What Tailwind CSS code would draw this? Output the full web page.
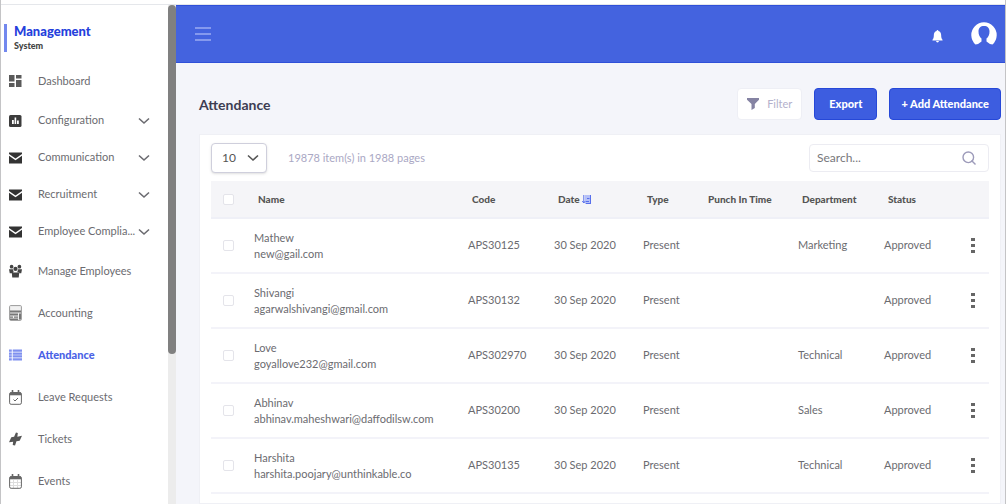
<!DOCTYPE html>
<html lang="en">
<head>
    <meta charset="UTF-8" />
    <meta name="viewport" content="width=device-width, initial-scale=1.0" />
    <title>Attendance - Management System</title>
    <script src="https://cdn.jsdelivr.net/npm/@tailwindcss/browser@4"></script>
</head>
<body class="h-screen overflow-hidden flex flex-col bg-white border-x border-[#c4c4c6] font-[Lato,sans-serif] text-[11px] text-[#6b6b70]">

<svg class="hidden">
    <symbol id="mail" viewBox="0 0 14 12"><path fill="currentColor" d="M0 0h14v1.600L7 6.500 0 1.600zM0 3.500l7 5 7-5V12H0z"/></symbol>
    <symbol id="chevron" viewBox="0 0 12 8"><path fill="none" stroke="currentColor" stroke-width="1.600" d="M1 1.500l5 4.500 5-4.500"/></symbol>
</svg>

<div class="h-[5px] shrink-0 border-b border-gray-200"></div>

<div class="flex flex-1 min-h-0">
    <!-- Sidebar -->
    <aside class="flex w-[175px] shrink-0 bg-white">
        <div class="flex-1 min-w-0 overflow-hidden">
            <div class="mt-[19px] mb-2 ml-[3px] h-7 border-l-3 border-[#7388ee] pl-[7px]">
                <p class="text-[13px] leading-[15px] font-black text-[#2440dc]">Management</p>
                <p class="text-[9px] leading-[13px] font-black text-[#444]">System</p>
            </div>
            <nav>
                <a href="#" class="flex h-[42px] items-center gap-4 pl-2">
                    <svg class="w-[13px] h-3 shrink-0 text-[#5a5a5a]" viewBox="0 0 13 12"><path fill="currentColor" d="M0 0h5.500v6.500H0zM7 0h5.500v3.500H7zM0 8h5.500v4H0zM7 5h5.500v7H7z"/></svg>
                    Dashboard
                </a>
                <a href="#" class="flex h-[37px] items-center gap-4 pl-2 pr-[18px]">
                    <svg class="w-[13px] h-3 shrink-0 text-[#3c3c3c]" viewBox="0 0 13 12"><rect width="12.500" height="12" rx="1.500" fill="currentColor"/><path fill="#fff" d="M3 5h1.800v4H3zM5.600 2.500h1.600V9H5.600zM8 5.500h1.800V9H8z"/></svg>
                    <span class="flex-1 truncate">Configuration</span>
                    <svg class="w-3 h-2 shrink-0"><use href="#chevron"/></svg>
                </a>
                <a href="#" class="flex h-[37px] items-center gap-4 pl-2 pr-[18px]">
                    <svg class="w-[13px] h-3 shrink-0 text-[#333]"><use href="#mail"/></svg>
                    <span class="flex-1 truncate">Communication</span>
                    <svg class="w-3 h-2 shrink-0"><use href="#chevron"/></svg>
                </a>
                <a href="#" class="flex h-[37px] items-center gap-4 pl-2 pr-[18px]">
                    <svg class="w-[13px] h-3 shrink-0 text-[#333]"><use href="#mail"/></svg>
                    <span class="flex-1 truncate">Recruitment</span>
                    <svg class="w-3 h-2 shrink-0"><use href="#chevron"/></svg>
                </a>
                <a href="#" class="flex h-[37px] items-center gap-4 pl-2 pr-[18px]">
                    <svg class="w-[13px] h-3 shrink-0 text-[#333]"><use href="#mail"/></svg>
                    <span class="flex-1 min-w-0 whitespace-nowrap">Employee Complia...</span>
                    <svg class="-ml-4 w-3 h-2 shrink-0"><use href="#chevron"/></svg>
                </a>
                <a href="#" class="flex h-[42px] items-center gap-4 pl-2">
                    <svg class="w-[13px] h-[14px] shrink-0 text-[#444]" viewBox="0 0 14 14"><g fill="currentColor"><circle cx="2.800" cy="2.300" r="2"/><circle cx="11.200" cy="2.300" r="2"/><circle cx="7" cy="4.800" r="2.300"/><path d="M0 5.200h4.200L5 8 3 9.500H.8zM14 5.200H9.800L9 8l2 1.500h2.200zM3 8.500h8l-.5 5.500h-7z"/></g></svg>
                    Manage Employees
                </a>
                <a href="#" class="flex h-[42px] items-center gap-4 pl-2">
                    <svg class="w-[13px] h-4 shrink-0" viewBox="0 0 13 16" fill="none"><rect x=".6" y=".6" width="11.800" height="14.800" rx="1" fill="#f1f1f1" stroke="#9a9a9a"/><path fill="#777" d="M1 5.500h11v2H1zM1 8.500h8v2H1zM10 8.500h2v6h-2zM1 11.500h3v1.200H1zM5 11.500h4v1.200H5zM1 13.500h8V15H1z"/></svg>
                    Accounting
                </a>
                <a href="#" class="flex h-[42px] items-center gap-4 pl-2 font-black text-[#4a62e6]">
                    <svg class="w-[13px] h-3 shrink-0 text-[#7f90ef]" viewBox="0 0 14 12"><path fill="currentColor" d="M0 0h3v2.400H0zM4 0h10v2.400H4zM0 3.200h3v2.400H0zM4 3.200h10v2.400H4zM0 6.400h3v2.400H0zM4 6.400h10v2.400H4zM0 9.600h3V12H0zM4 9.600h10V12H4z"/></svg>
                    Attendance
                </a>
                <a href="#" class="flex h-[42px] items-center gap-4 pl-2">
                    <svg class="w-[13px] h-[15px] shrink-0 text-[#666]" viewBox="0 0 13 15" fill="none" stroke="currentColor"><rect x=".6" y="2.500" width="11.800" height="11.800" rx="1.500"/><path d="M1 4h11" stroke-width="2.600"/><path d="M3.500 0v3M9.500 0v3" stroke-width="1.600"/><path d="M4.500 9.500l1.500 1.500 3-3"/></svg>
                    Leave Requests
                </a>
                <a href="#" class="flex h-[42px] items-center gap-4 pl-2">
                    <svg class="w-[13px] h-[14px] shrink-0 text-[#555]" viewBox="0 0 14 14"><path fill="currentColor" d="M7.500 0L9.500.5 9 4.500 14 3.500 11.500 9 8 9.500 6.500 14 4 13.500 4.500 10 0 10.500 2.500 5 5.500 4.500z"/></svg>
                    Tickets
                </a>
                <a href="#" class="flex h-[42px] items-center gap-4 pl-2">
                    <svg class="w-[13px] h-[15px] shrink-0 text-[#666]" viewBox="0 0 13 15" fill="none" stroke="currentColor"><path d="M1 8.500h11M1 11.500h11M4.500 6v8M8.500 6v8" stroke="#ddd"/><rect x=".6" y="2.500" width="11.800" height="11.800" rx="1.500"/><path d="M1 4h11" stroke-width="2.600"/><path d="M3.500 0v3M9.500 0v3" stroke-width="1.600"/></svg>
                    Events
                </a>
            </nav>
        </div>
        <!-- Scroll track -->
        <div class="w-2 shrink-0 bg-[#ececec]">
            <div class="h-[70%] rounded-full bg-[#808080]"></div>
        </div>
    </aside>

    <div class="flex flex-1 min-w-0 flex-col bg-[#f4f5fa]">
        <header class="flex h-[58px] shrink-0 items-center bg-[#4463df] border-y border-[#2f50d8] pl-[19px] pr-2">
            <button type="button" aria-label="Toggle menu">
                <svg class="w-4 h-4 text-[#8599ee]" viewBox="0 0 16 16"><path stroke="currentColor" stroke-width="2" d="M0 2h16M0 8h16M0 14h16"/></svg>
            </button>
            <button type="button" aria-label="Notifications" class="ml-auto pt-1">
                <svg class="w-[11px] h-[13px] text-white" viewBox="0 0 12 14"><path fill="currentColor" d="M6 0c.6 0 1 .4 1 1 2 .6 3 2.200 3 4.500 0 2.500.5 3.800 1.500 5v.8H.5v-.8c1-1.200 1.500-2.500 1.500-5C2 3.200 3 1.600 5 1c0-.6.4-1 1-1zM4.500 12h3c0 1-.6 1.600-1.500 1.600S4.500 13 4.500 12z"/></svg>
            </button>
            <button type="button" aria-label="Account" class="ml-7">
                <svg class="w-[26px] h-[26px]" viewBox="0 0 26 26"><path fill="#fff" d="M4.500 23.500A12.700 12.700 0 1 1 21.500 23.500Q18 23 15.500 20.500V17.500C17.500 16 18.500 13.500 18.500 10.500 18.500 7 16.500 5 13 5S7.500 7 7.500 10.500C7.500 13.500 8.500 16 10.500 17.500V20.500Q8 23 4.500 23.500z"/></svg>
            </button>
        </header>

        <main class="flex flex-1 min-h-0 flex-col pl-[23px] pr-1 pt-[25px]">
            <div class="flex h-8 shrink-0 items-center gap-3">
                <h1 class="mr-auto text-[14px] font-bold text-[#3d3d52]">Attendance</h1>
                <button type="button" class="flex h-8 items-center gap-2 rounded-sm border border-[#eeeff5] bg-white px-[9px] text-[#b3b1cc]">
                    <svg class="w-3 h-3 text-[#8583a3]" viewBox="0 0 12 12"><path fill="currentColor" d="M0 0h12v1.800L7.800 6v4L4.500 12V6L0 1.800z"/></svg>
                    Filter
                </button>
                <button type="button" class="h-8 rounded-sm border border-[#2648d8] bg-[#3d5de0] px-[14px] font-black text-white">Export</button>
                <button type="button" class="h-8 rounded-sm border border-[#2648d8] bg-[#3d5de0] px-[11px] font-black text-white">+ Add Attendance</button>
            </div>

            <section class="mt-[14px] flex-1 min-h-0 overflow-hidden border border-[#eff0f5] bg-white px-[11px] pt-2">
                <div class="flex items-center pb-2">
                    <div class="relative">
                        <select aria-label="Items per page" class="h-[30px] w-14 appearance-none rounded-sm border border-[#cfcfdc] bg-white pl-[10px] text-[12px] text-[#555] shadow-sm">
                            <option>10</option>
                            <option>25</option>
                            <option>50</option>
                        </select>
                        <svg class="pointer-events-none absolute right-2 top-[11px] w-3 h-2 text-[#555]"><use href="#chevron"/></svg>
                    </div>
                    <p class="ml-[21px] text-[#aaa8c4]">19878 item(s) in 1988 pages</p>
                    <label class="ml-auto flex h-7 w-[180px] items-center rounded-sm border border-[#ececf2] pl-[7px] pr-3">
                        <input type="search" aria-label="Search" placeholder="Search..." class="min-w-0 flex-1 text-[12px] outline-none placeholder:text-[#77777c]" />
                        <svg class="w-[14px] h-[14px] text-[#9d9bba]" viewBox="0 0 14 14" fill="none" stroke="currentColor" stroke-width="1.400"><circle cx="6.300" cy="6.300" r="5.300"/><path d="M9.500 9.500l4 4"/></svg>
                    </label>
                </div>

                <table class="w-full table-fixed text-left">
                    <colgroup>
                        <col class="w-[43px]" />
                        <col />
                        <col class="w-[86px]" />
                        <col class="w-[89px]" />
                        <col class="w-[61px]" />
                        <col class="w-[94px]" />
                        <col class="w-[86px]" />
                        <col class="w-[73px]" />
                        <col class="w-8" />
                    </colgroup>
                    <thead class="bg-[#f5f5f8] text-[10px] text-[#555]">
                        <tr class="h-[37px] border-b-2 border-[#eff0f7]">
                            <th class="pl-3"><input type="checkbox" aria-label="Select all" class="block w-[11px] h-[11px] appearance-none rounded-xs border border-[#e4e4ea] bg-white" /></th>
                            <th class="pl-1 font-black">Name</th>
                            <th class="pl-1 font-black">Code</th>
                            <th class="pl-1 font-black">
                                <span class="flex items-center gap-[2px]">Date
                                    <svg class="w-[9px] h-[9px]" viewBox="0 0 9 9" fill="none"><path fill="#b5c0f7" d="M3 0h6v9H3z"/><path stroke="#5870ec" d="M1.800 0v8M.3 6l1.500 2 1.500-2M5 3.500h2.500M4 6.500h3M4 8.500h4.500M8.500 0v9"/></svg>
                                </span>
                            </th>
                            <th class="pl-1 font-black">Type</th>
                            <th class="pl-1 font-black">Punch In Time</th>
                            <th class="pl-1 font-black">Department</th>
                            <th class="pl-1 font-black">Status</th>
                            <th></th>
                        </tr>
                    </thead>
                    <tbody id="rows"></tbody>
                </table>
            </section>
        </main>
    </div>
</div>

<script>
    const records = [
        { name: 'Mathew', email: 'new@gail.com', code: 'APS30125', department: 'Marketing' },
        { name: 'Shivangi', email: 'agarwalshivangi@gmail.com', code: 'APS30132', department: '' },
        { name: 'Love', email: 'goyallove232@gmail.com', code: 'APS302970', department: 'Technical' },
        { name: 'Abhinav', email: 'abhinav.maheshwari@daffodilsw.com', code: 'APS30200', department: 'Sales' },
        { name: 'Harshita', email: 'harshita.poojary@unthinkable.co', code: 'APS30135', department: 'Technical' }
    ];

    document.getElementById('rows').innerHTML = records.map(r => `
        <tr class="h-[55px] border-b-2 border-[#f3f3f9]">
            <td class="pl-3"><input type="checkbox" aria-label="Select ${r.name}" class="block w-[11px] h-[11px] appearance-none rounded-xs border border-[#e4e4ea] bg-white" /></td>
            <td class="leading-4 whitespace-nowrap">${r.name}<br />${r.email}</td>
            <td>${r.code}</td>
            <td>30 Sep 2020</td>
            <td>Present</td>
            <td></td>
            <td>${r.department}</td>
            <td>Approved</td>
            <td class="pl-[14px]">
                <button type="button" aria-label="Actions for ${r.name}" class="block">
                    <svg class="w-1 h-4 text-[#666]" viewBox="0 0 4 16"><path fill="currentColor" d="M0 0h4v3H0zM0 6h4v3H0zM0 12h4v3H0z"/></svg>
                </button>
            </td>
        </tr>`).join('');
</script>
</body>
</html>
